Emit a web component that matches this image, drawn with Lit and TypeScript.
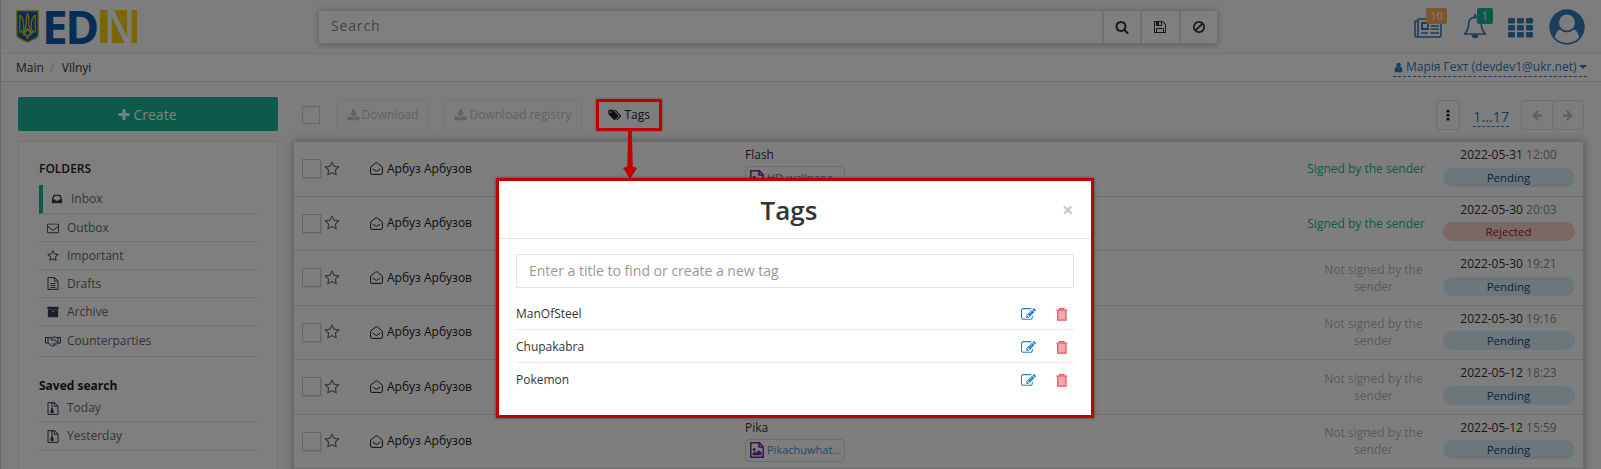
import { LitElement, html, css, svg } from "lit";
import { customElement, property } from "lit/decorators.js";
import { classMap } from "lit/directives/class-map.js";

const SOLID: Record<string, string> = {
  plus: "M1600 736v192q0 40-28 68t-68 28h-416v416q0 40-28 68t-68 28h-192q-40 0-68-28t-28-68v-416h-416q-40 0-68-28t-28-68v-192q0-40 28-68t68-28h416v-416q0-40 28-68t68-28h192q40 0 68 28t28 68v416h416q40 0 68 28t28 68z",
  star: "M1201 1004l306-297-422-62-189-382-189 382-422 62 306 297-73 421 378-199 377 199zm527-357q0 22-26 48l-363 354 86 500q1 7 1 20 0 50-41 50-19 0-40-12l-449-236-449 236q-22 12-40 12-21 0-31.5-14.5t-10.5-35.5q0-6 2-20l86-500-364-354q-25-27-25-48 0-37 56-46l502-73 225-455q19-41 49-41t49 41l225 455 502 73q56 9 56 46z",
  download: "M1344 1344q0-26-19-45t-45-19-45 19-19 45 19 45 45 19 45-19 19-45zm256 0q0-26-19-45t-45-19-45 19-19 45 19 45 45 19 45-19 19-45zm128-224v320q0 40-28 68t-68 28h-1472q-40 0-68-28t-28-68v-320q0-40 28-68t68-28h465l135 136q58 56 136 56t136-56l136-136h464q40 0 68 28t28 68zm-325-569q17 41-14 70l-448 448q-18 19-45 19t-45-19l-448-448q-31-29-14-70 17-39 59-39h256v-448q0-26 19-45t45-19h256q26 0 45 19t19 45v448h256q42 0 59 39z",
  search: "M1216 832q0-185-131.5-316.5t-316.5-131.5-316.5 131.5-131.5 316.5 131.5 316.5 316.5 131.5 316.5-131.5 131.5-316.5zm512 832q0 52-38 90t-90 38q-54 0-90-38l-343-342q-179 124-399 124-143 0-273.5-55.5t-225-150-150-225-55.5-273.5 55.5-273.5 150-225 225-150 273.5-55.5 273.5 55.5 225 150 150 225 55.5 273.5q0 220-124 399l343 343q37 37 37 90z",
  ban: "M1440 893q0-161-87-295l-754 753q137 89 297 89 111 0 211.5-43.5t173.5-116.5 116-174.5 43-212.5zm-999 299l755-754q-135-91-300-91-148 0-273 73t-198 199-73 274q0 162 89 299zm1223-299q0 157-61 300t-163.5 246-245 164-298.5 61-298.5-61-245-164-163.5-246-61-300 61-299.5 163.5-245.5 245-164 298.5-61 298.5 61 245 164 163.5 245.5 61 299.5z",
  mail: "M1664 1504v-768q-32 36-69 66-268 206-426 338-51 43-83 67t-86.5 48.5-102.5 24.5h-2q-48 0-102.5-24.5t-86.5-48.5-83-67q-158-132-426-338-37-30-69-66v768q0 13 9.5 22.5t22.5 9.5h1472q13 0 22.5-9.5t9.5-22.5zm0-1051v-24.5l-.5-13-3-12.5-5.5-9-9-7.5-14-2.5h-1472q-13 0-22.5 9.5t-9.5 22.5q0 168 147 284 193 152 401 317 6 5 35 29.5t46 37.5 44.5 31.5 50.5 27.5 43 9h2q20 0 43-9t50.5-27.5 44.5-31.5 46-37.5 35-29.5q208-165 401-317 54-43 100.5-115.5t46.5-131.5zm128-37v1088q0 66-47 113t-113 47h-1472q-66 0-113-47t-47-113v-1088q0-66 47-113t113-47h1472q66 0 113 47t47 113z",
  inbox: "M1151 960h316q-1-3-2.5-8t-2.5-8l-212-496h-708l-212 496q-1 2-2.5 8t-2.5 8h316l95 192h320zm513 30v482q0 26-19 45t-45 19h-1408q-26 0-45-19t-19-45v-482q0-62 25-123l238-552q10-25 36.5-42t52.5-17h832q26 0 52.5 17t36.5 42l238 552q25 61 25 123z",
  edit: "M888 1184l116-116-152-152-116 116v56h96v96h56zm440-720q-16-16-33 1l-350 350q-17 17-1 33t33-1l350-350q17-17 1-33zm80 594v190q0 119-84.5 203.5t-203.5 84.5h-832q-119 0-203.5-84.5t-84.5-203.5v-832q0-119 84.5-203.5t203.5-84.5h832q63 0 117 25 15 7 18 23 3 17-9 29l-49 49q-14 14-32 8-23-6-45-6h-832q-66 0-113 47t-47 113v832q0 66 47 113t113 47h832q66 0 113-47t47-113v-126q0-13 9-22l64-64q15-15 35-7t20 29zm-96-738l288 288-672 672h-288v-288zm444 132l-92 92-288-288 92-92q28-28 68-28t68 28l152 152q28 28 28 68t-28 68z",
  user: "M1536 1399q0 109-62.5 187t-150.5 78h-854q-88 0-150.5-78t-62.5-187q0-85 8.5-160.5t31.5-152 58.5-131 94-89 134.5-34.5q131 128 313 128t313-128q76 0 134.5 34.5t94 89 58.5 131 31.5 152 8.5 160.5zm-256-887q0 159-112.5 271.5t-271.5 112.5-271.5-112.5-112.5-271.5 112.5-271.5 271.5-112.5 271.5 112.5 112.5 271.5z",
  tags: "M576 448q0-53-37.5-90.5t-90.5-37.5-90.5 37.5-37.5 90.5 37.5 90.5 90.5 37.5 90.5-37.5 37.5-90.5zm1067 576q0 53-37 90l-491 492q-39 37-91 37-53 0-90-37l-715-716q-38-37-64.5-101t-26.5-117v-416q0-52 38-90t90-38h416q53 0 117 26.5t102 64.5l715 714q37 39 37 91zm384 0q0 53-37 90l-491 492q-39 37-91 37-36 0-59-14t-53-45l470-470q37-37 37-90 0-52-37-91l-715-714q-38-38-102-64.5t-117-26.5h224q53 0 117 26.5t102 64.5l715 714q37 39 37 91z",
  archive: "M1088 832q0-26-19-45t-45-19h-256q-26 0-45 19t-19 45 19 45 45 19h256q26 0 45-19t19-45zm576-192v960q0 26-19 45t-45 19h-1408q-26 0-45-19t-19-45v-960q0-26 19-45t45-19h1408q26 0 45 19t19 45zm64-448v256q0 26-19 45t-45 19h-1536q-26 0-45-19t-19-45v-256q0-26 19-45t45-19h1536q26 0 45 19t19 45z",
  save: "M512 1536h768v-384h-768v384zm896 0h128v-896q0-14-10-38.5t-20-34.5l-281-281q-10-10-34-20t-39-10v416q0 40-28 68t-68 28h-576q-40 0-68-28t-28-68v-416h-128v1280h128v-416q0-40 28-68t68-28h832q40 0 68 28t28 68v416zm-384-928v-320q0-13-9.5-22.5t-22.5-9.5h-192q-13 0-22.5 9.5t-9.5 22.5v320q0 13 9.5 22.5t22.5 9.5h192q13 0 22.5-9.5t9.5-22.5zm640 32v928q0 40-28 68t-68 28h-1344q-40 0-68-28t-28-68v-1344q0-40 28-68t68-28h928q40 0 88 20t76 48l280 280q28 28 48 76t20 88z",
  left: "M1664 896v128q0 53-32.5 90.5t-84.5 37.5h-704l293 294q38 36 38 90t-38 90l-75 76q-37 37-90 37-52 0-91-37l-651-652q-37-37-37-90 0-52 37-91l651-650q38-38 91-38 52 0 90 38l75 74q38 38 38 91t-38 91l-293 293h704q52 0 84.5 37.5t32.5 90.5z",
};

const solid = (name: string, size: number, wide = false) => html`
  <svg width=${wide ? size * 1.12 : size} height=${size} viewBox=${wide ? "64 0 2000 1792" : "0 0 1792 1792"}>
    ${svg`<path fill="currentColor" d=${SOLID[name]}></path>`}
  </svg>`;

const page = svg`<path d="M1 .6H7.6L11 4V12.4H1Z M7.4 .8V4.2H10.8" fill="none" stroke="currentColor"></path>`;
const draftIcon = html`<svg width="12" height="13" viewBox="0 0 12 13">${page}${svg`<path d="M3.5 6.5h5M3.5 8.5h5M3.5 10.5h5" stroke="currentColor" stroke-width=".9"></path>`}</svg>`;
const zipIcon = html`<svg width="12" height="13" viewBox="0 0 12 13">${page}${svg`<path d="M5 1v6" stroke="currentColor" stroke-width="1.6" stroke-dasharray="1 .6"></path><path d="M4.3 6.5h1.5l1 3.2a1.7 1.5 0 1 1-3.4 0z" fill="currentColor"></path>`}</svg>`;
const imageIcon = html`<svg width="14" height="16" viewBox="0 0 14 16">${svg`<path d="M.8.8H9.3L13.2 4.7V15.2H.8Z M9 1V5H13" fill="none" stroke="currentColor" stroke-width="1.5"></path><circle cx="4.2" cy="7.4" r="1.5" fill="currentColor"></circle><path d="M2.5 13.2v-1.7l2-1.9 1.5 1.2 2.8-2.6 2.7 2.4v2.6z" fill="currentColor"></path>`}</svg>`;
const openMail = html`<svg width="13" height="13" viewBox="0 0 13 13">${svg`<path d="M.6 5.1 5.4 1.2Q6.5.4 7.6 1.2L12.4 5.1V11.2Q12.4 12.4 11.2 12.4H1.8Q.6 12.4.6 11.2Z M2.8 7 5.2 8.8Q6.5 9.7 7.8 8.8L10.2 7" fill="none" stroke="currentColor"></path>`}</svg>`;
const handshake = html`<svg width="16" height="11" viewBox="0 0 16 11">${svg`<path d="M.5 1.3 3 1.6V7H.5ZM15.5 1.3 13 1.6V7h2.5ZM3 2l2.2-.8 2 .7M3 7l3.6 2.9q1.3.7 2.4-.2L13 7M13 2l-2.4-.9H8.4L6 3.2q.3 1.6 2.3.9l1.2-.7L12.4 6.5M7.6 7.6l1.6 1.5M9 6.6l1.8 1.5" fill="none" stroke="currentColor"></path>`}</svg>`;
const trash = html`<svg width="12" height="13" viewBox="0 0 12 13">${svg`<path d="M1.7 2.6V12.2H10V2.6" fill="#f7a6ae" stroke="#ed5565" stroke-width="1.3"></path><path d="M.3 2.2H11.4M3.6 2V.7H8V2" fill="none" stroke="#ed5565" stroke-width="1.2"></path>`}</svg>`;
const news = html`<svg width="28" height="20" viewBox="0 0 28 20">${svg`<path d="M4 1H27V17.4Q27 19 25.4 19H3Q1 19 1 17V3.2H4M4 1V17Q4 19 3 19" fill="none" stroke="currentColor" stroke-width="1.6"></path><path d="M8 5H14V11H8Z" fill="none" stroke="currentColor" stroke-width="1.8"></path><path d="M16.5 5H25M16.5 8H25M16.5 11H25M7 15H14M16.5 15H25" stroke="currentColor" stroke-width="1.4"></path>`}</svg>`;
const bell = html`<svg width="24" height="25" viewBox="0 0 24 25">${svg`<path d="M12 3.2C7.4 3.4 5.7 6.5 5.7 10 5.7 15 4 17.4 1.6 20H22.4C20 17.4 18.3 15 18.3 10 18.3 6.5 16.6 3.4 12 3.2Z" fill="none" stroke="currentColor" stroke-width="1.6" stroke-linejoin="round"></path><path d="M12 1v2" stroke="currentColor" stroke-width="2.2" stroke-linecap="round"></path><path d="M8.7 21h6.6a3.3 3.3 0 0 1-6.6 0z" fill="currentColor"></path>`}</svg>`;
const gridIcon = html`<svg width="25" height="20" viewBox="0 0 25 20">${[0, 9, 18].map((x) => [0, 7, 14].map((y) => svg`<rect x=${x} y=${y} width="7" height="5.4" rx="1.2" fill="currentColor"></rect>`))}</svg>`;
const avatar = html`<svg width="36" height="36" viewBox="0 0 36 36">${svg`<circle cx="18" cy="18" r="17.7" fill="currentColor"></circle><path d="M5.8 28.4C6.6 24 8.8 21 12.3 19.8L23.7 19.8C27.2 21 29.4 24 30.2 28.4A16 16 0 0 1 5.8 28.4Z" fill="#fafafa"></path><circle cx="18" cy="13.5" r="9.8" fill="currentColor"></circle><circle cx="18" cy="13.5" r="8" fill="#fafafa"></circle>`}</svg>`;
const crest = html`<svg width="23" height="33" viewBox="0 0 23 33">${svg`<path d="M.8.8H22.2V25Q22.2 27.2 20 28.2L11.5 32.2 3 28.2Q.8 27.2.8 25Z" fill="#1159ac" stroke="#d2ae28" stroke-width="1.3"></path><path d="M11.5 3.5 10.3 8V15L8.5 21.5M11.5 3.5 12.7 8V15L14.5 21.5M3.8 5V21.8H9M19.2 5V21.8H14M3.8 5Q8 9 7.6 15.5 8.7 17.5 6.3 21.5M19.2 5Q15 9 15.4 15.5 14.3 17.5 16.7 21.5M11.5 19 8.5 22.5 11.5 28.5 14.5 22.5ZM6.5 22Q7 25.5 11.5 25.5T16.5 22" fill="none" stroke="#e8c80c" stroke-width="1.2"></path>`}</svg>`;

@customElement("mail-row")
class MailRow extends LitElement {
  @property() subject = "";
  @property() file = "";
  @property() date = "";
  @property() time = "";
  @property() status = "";
  @property({ type: Boolean }) signed = false;

  static styles = css`
    :host { display: grid; grid-template-columns: 8px 19px 4px 16px 29px 375px 1fr 136px 140.5px; align-items: center; height: 54.5px; border-bottom: 1px solid #dcdcdc; background: #fdfdfd; color: #333; }
    svg { display: block; flex: none; }
    .check { width: 17px; height: 17px; border: 1px solid #cfcfcf; box-shadow: 1px 1px 0 #e6e6e6; grid-column: 2; }
    .star { grid-column: 4; color: #676a6c; margin-left: -1px; }
    .who { grid-column: 6; display: flex; gap: 4px; align-items: center; color: #222; }
    .what { grid-column: 7; display: flex; flex-direction: column; align-self: start; align-items: start; padding-top: 4px; line-height: 18px; }
    .chip { display: flex; align-items: center; gap: 3px; width: 94px; height: 21px; margin-top: 2px; padding-left: 4px; border: 1px solid #d8d8d8; border-radius: 4px; font-size: 11px; color: #3498db; }
    .chip .pic { color: #6f2a9a; }
    .sign { grid-column: 8; line-height: 17px; text-align: center; color: #b5b5b5; padding: 0 17px 0 15px; }
    .sign.ok { color: #1ab394; padding: 0; width: 119px; white-space: nowrap; }
    .when { grid-column: 9; display: flex; flex-direction: column; align-items: center; align-self: start; width: 132px; padding-top: 3px; line-height: 19px; }
    .time { color: #888; }
    .pill { width: 132px; height: 19px; margin-top: 3.5px; border-radius: 10px; text-align: center; font-size: 11.5px; line-height: 19px; background: #d9edf7; color: #104c70; }
    .pill.bad { background: #f8cfcf; color: #9c1c1c; }
  `;

  render() {
    return html`
      <span class="check"></span>
      <span class="star">${solid("star", 16)}</span>
      <span class="who">${openMail}<span>Арбуз Арбузов</span></span>
      <div class="what">
        ${this.subject ? html`<span>${this.subject}</span><span class="chip"><span class="pic">${imageIcon}</span>${this.file}</span>` : ""}
      </div>
      <span class=${classMap({ sign: true, ok: this.signed })}>${this.signed ? "Signed by the sender" : "Not signed by the sender"}</span>
      <div class="when">
        <span>${this.date} <span class="time">${this.time}</span></span>
        <span class=${classMap({ pill: true, bad: this.status === "Rejected" })}>${this.status}</span>
      </div>`;
  }
}

@customElement("tags-dialog")
class TagsDialog extends LitElement {
  static styles = css`
    :host { display: block; box-sizing: border-box; width: 598px; height: 240px; border: 3px solid #c00000; background: #fff; box-shadow: 0 0 3px rgba(0, 0, 0, .5); color: #333; }
    svg { display: block; }
    .head { display: grid; grid-template-columns: 40px 1fr 40px; height: 57px; align-items: center; border-bottom: 1px solid #e5e5e5; }
    h2 { grid-column: 2; margin: 0; padding-right: 12px; text-align: center; font-size: 26px; font-weight: 600; line-height: 30px; }
    .close { padding-left: 11px; font-size: 20px; font-weight: 700; color: #c8c8c8; line-height: 20px; }
    .body { padding: 15px 17px; }
    .field { display: flex; align-items: center; height: 32px; border: 1px solid #e2e5e6; padding-left: 12px; font-size: 14px; color: #999; }
    .list { padding-top: 9px; }
    .item { display: flex; box-sizing: border-box; align-items: center; height: 33px; padding-top: 2px; border-bottom: 1px solid #e7eaec; }
    .item:last-child { border-color: transparent; }
    .name { flex: 1; }
    .edit { color: #1c84c6; padding-right: 20px; }
    .del { padding-right: 6px; padding-top: 1px; }
  `;
  render() {
    return html`
      <div class="head"><h2>Tags</h2><span class="close">×</span></div>
      <div class="body">
        <div class="field">Enter a title to find or create a new tag</div>
        <div class="list">
          ${["ManOfSteel", "Chupakabra", "Pokemon"].map((t) => html`
            <div class="item"><span class="name">${t}</span><span class="edit">${solid("edit", 15)}</span><span class="del">${trash}</span></div>`)}
        </div>
      </div>`;
  }
}

const MAILS = [
  { subject: "Flash", file: "HD-wallpape...", date: "2022-05-31", time: "12:00", status: "Pending", signed: true },
  { subject: "", file: "", date: "2022-05-30", time: "20:03", status: "Rejected", signed: true },
  { subject: "", file: "", date: "2022-05-30", time: "19:21", status: "Pending", signed: false },
  { subject: "", file: "", date: "2022-05-30", time: "19:16", status: "Pending", signed: false },
  { subject: "", file: "", date: "2022-05-12", time: "18:23", status: "Pending", signed: false },
  { subject: "Pika", file: "Pikachuwhat...", date: "2022-05-12", time: "15:59", status: "Pending", signed: false },
];

@customElement("app-root")
class AppRoot extends LitElement {
  static styles = css`
    :host { display: block; position: relative; width: 1601px; height: 469px; overflow: hidden; background: #fafafa; font: 12px/18px "Open Sans", "Noto Sans", sans-serif; color: #333; }
    * { box-sizing: border-box; }
    svg { display: block; flex: none; }
    .page { height: 469px; border-left: 1px solid #d0d0d0; }
    .top { display: flex; height: 54px; border-bottom: 1px solid #e7e7e7; padding-left: 15px; }
    .logo { display: flex; width: 303px; padding-top: 10px; }
    .brand { display: flex; height: 33px; padding-left: 3px; font-size: 46px; font-weight: 700; line-height: 33px; letter-spacing: -2.5px; color: #1159ac; }
    .gold { width: 37px; height: 33px; margin-left: 3px; background: #f7cd0a; color: #fafafa; }
    .knock { display: block; width: 37px; font-size: 50px; font-weight: 600; letter-spacing: 0; transform: translateX(4px) scaleX(.8); transform-origin: 0 0; }
    .search { display: flex; width: 898px; height: 32px; margin-top: 11px; background: #fff; box-shadow: 0 1px 6px 1px rgba(90, 100, 130, .4); }
    .query { flex: 1; padding-left: 12px; font-size: 14px; letter-spacing: .85px; line-height: 30px; color: #888; }
    .tool { display: flex; width: 38.5px; align-items: center; justify-content: center; border-left: 2px solid #e3e3e3; }
    .quick { display: flex; margin-left: auto; color: #337ab7; }
    .cell { position: relative; }
    .count { position: absolute; top: 8px; height: 16px; border-radius: 2px; color: #fff; font-size: 11px; line-height: 16px; text-align: center; }
    .count.news { left: 12px; width: 21px; background: #f8ac59; }
    .count.bell { left: 14px; width: 16px; background: #1ab394; }
    .news-cell { width: 49px; padding-top: 18px; }
    .bell-cell { width: 45px; padding-top: 14px; }
    .grid-cell { width: 41px; padding-top: 18px; }
    .face { width: 52px; padding-top: 8.5px; }
    .crumbs { display: flex; height: 28px; align-items: center; padding: 0 14px 0 15px; background: #fff; border-bottom: 1px solid #e1e1e1; }
    .slash { padding: 0 7.5px 0 6px; color: #bbb; }
    .account { display: flex; margin-left: auto; align-items: center; gap: 1.5px; height: 18px; border-bottom: 1px dashed #337ab7; color: #337ab7; }
    .caret { border: 4px solid transparent; border-top-color: #337ab7; border-bottom: 0; margin-left: 1px; width: 8px; height: 4px; }
    .main { display: grid; grid-template-columns: 260px 1290px; column-gap: 16px; padding: 15px 0 0 17px; }
    .create { display: flex; height: 34px; align-items: center; justify-content: center; gap: 2px; padding: 1px 2px 0 0; border-radius: 2px; background: #1ab394; color: #fff; font-size: 14px; }
    .side { height: 360px; margin-top: 10px; padding: 17px 20px; border: 1px solid #e4e4ee; background: #fff; }
    .title { font-weight: 600; line-height: 20px; color: #1d1d1d; padding-bottom: 6px; }
    .title.saved { font-weight: 700; line-height: 18px; padding: 20px 0 0; }
    .entry { display: flex; align-items: center; height: 28px; border-bottom: 1px solid #dfdfdf; color: #676a6c; }
    .entry.on { height: 29px; border-left: 4px solid #1ab394; }
    .entry.tall { height: 31px; }
    .entry.first { height: 27px; }
    .entry.last { height: 29px; }
    .glyph { display: flex; justify-content: center; width: 30px; padding-right: 2px; color: #2f4050; margin-right: -2px; }
    .bar { display: flex; height: 44px; padding-left: 8px; }
    .check { width: 18px; height: 18px; margin: 9px 16px 0 0; border: 1px solid #cfcfcf; }
    .btn { display: flex; align-items: center; justify-content: center; gap: 2px; height: 30px; margin: 3px 15px 0 0; border: 1px solid #ececec; border-radius: 2px; background: #fbfbfb; color: #c4c4c4; }
    .btn.a { width: 93px; } .btn.b { width: 138px; }
    .btn.c { width: 60px; gap: 3px; color: #222; border-color: transparent; margin-left: 2px; }
    .btn.dots { width: 24px; margin: 3px 13px 0 auto; color: #222; border-color: #dedede; }
    .pager { height: 20px; margin: 10px 12px 0 0; font-size: 14px; line-height: 20px; letter-spacing: .1px; color: #337ab7; border-bottom: 1px dashed #337ab7; }
    .btn.prev, .btn.next { width: 32px; margin-right: 0; color: #c3c3c3; border-color: #e0e0e0; }
    .btn.next { margin-left: -1px; }
    .btn.next svg { transform: scaleX(-1); }
    .mails { border: 1px solid #dcdcdc; border-width: 1px 1px 0 0; box-shadow: 0 0 8px rgba(60, 60, 90, .45); height: 360px; }
    .shade { position: absolute; inset: 0; background: rgba(0, 0, 0, .5); }
    .dialog { position: absolute; left: 496px; top: 178px; }
    .frame { position: absolute; left: 596px; top: 98.5px; width: 66px; height: 32px; border: 3px solid #c00000; border-radius: 1px; box-shadow: 0 0 2px rgba(120, 0, 0, .6); }
    .pointer { position: absolute; left: 622px; top: 129px; }
  `;

  entry(glyph: unknown, text: string, kind = "") {
    return html`<div class="entry ${kind}"><span class="glyph">${glyph}</span><span>${text}</span></div>`;
  }

  render() {
    return html`
      <div class="page">
        <div class="top">
          <div class="logo">${crest}<div class="brand">ED<span class="gold"><span class="knock">N</span></span></div></div>
          <div class="search">
            <span class="query">Search</span>
            <span class="tool">${solid("search", 14)}</span>
            <span class="tool">${solid("save", 14)}</span>
            <span class="tool">${solid("ban", 14)}</span>
          </div>
          <div class="quick">
            <div class="cell news-cell">${news}<span class="count news">10</span></div>
            <div class="cell bell-cell">${bell}<span class="count bell">1</span></div>
            <div class="cell grid-cell">${gridIcon}</div>
            <div class="face">${avatar}</div>
          </div>
        </div>
        <div class="crumbs">
          <span>Main</span><span class="slash">/</span><span>Vilnyi</span>
          <span class="account">${solid("user", 11)}<span>Марія Гехт (devdev1@ukr.net)</span><span class="caret"></span></span>
        </div>
        <div class="main">
          <div>
            <div class="create">${solid("plus", 14)}<span>Create</span></div>
            <div class="side">
              <div class="title">FOLDERS</div>
              ${this.entry(solid("inbox", 12), "Inbox", "on")}
              ${this.entry(solid("mail", 12), "Outbox")}
              ${this.entry(solid("star", 12), "Important")}
              ${this.entry(draftIcon, "Drafts")}
              ${this.entry(solid("archive", 12), "Archive")}
              ${this.entry(handshake, "Counterparties", "tall")}
              <div class="title saved">Saved search</div>
              ${this.entry(zipIcon, "Today", "first")}
              ${this.entry(zipIcon, "Yesterday", "last")}
            </div>
          </div>
          <div>
            <div class="bar">
              <span class="check"></span>
              <span class="btn a">${solid("download", 13)}Download</span>
              <span class="btn b">${solid("download", 13)}Download registry</span>
              <span class="btn c">${solid("tags", 12, true)}Tags</span>
              <span class="btn dots"><svg width="4" height="11" viewBox="0 0 4 11">${[0, 4, 8].map((y) => svg`<rect x=".5" y=${y} width="3" height="2.6" rx=".6" fill="currentColor"></rect>`)}</svg></span>
              <span class="pager">1...17</span>
              <span class="btn prev">${solid("left", 12)}</span>
              <span class="btn next">${solid("left", 12)}</span>
            </div>
            <div class="mails">
              ${MAILS.map((m) => html`<mail-row .subject=${m.subject} .file=${m.file} .date=${m.date} .time=${m.time} .status=${m.status} .signed=${m.signed}></mail-row>`)}
            </div>
          </div>
        </div>
      </div>
      <div class="shade"></div>
      <div class="frame"></div>
      <svg class="pointer" width="16" height="50" viewBox="0 0 16 50">${svg`<path d="M6.2 1H9.8L10.8 37.5 15 39 8 50 1 39 5.2 37.5Z" fill="#c00000"></path>`}</svg>
      <tags-dialog class="dialog"></tags-dialog>`;
  }
}
